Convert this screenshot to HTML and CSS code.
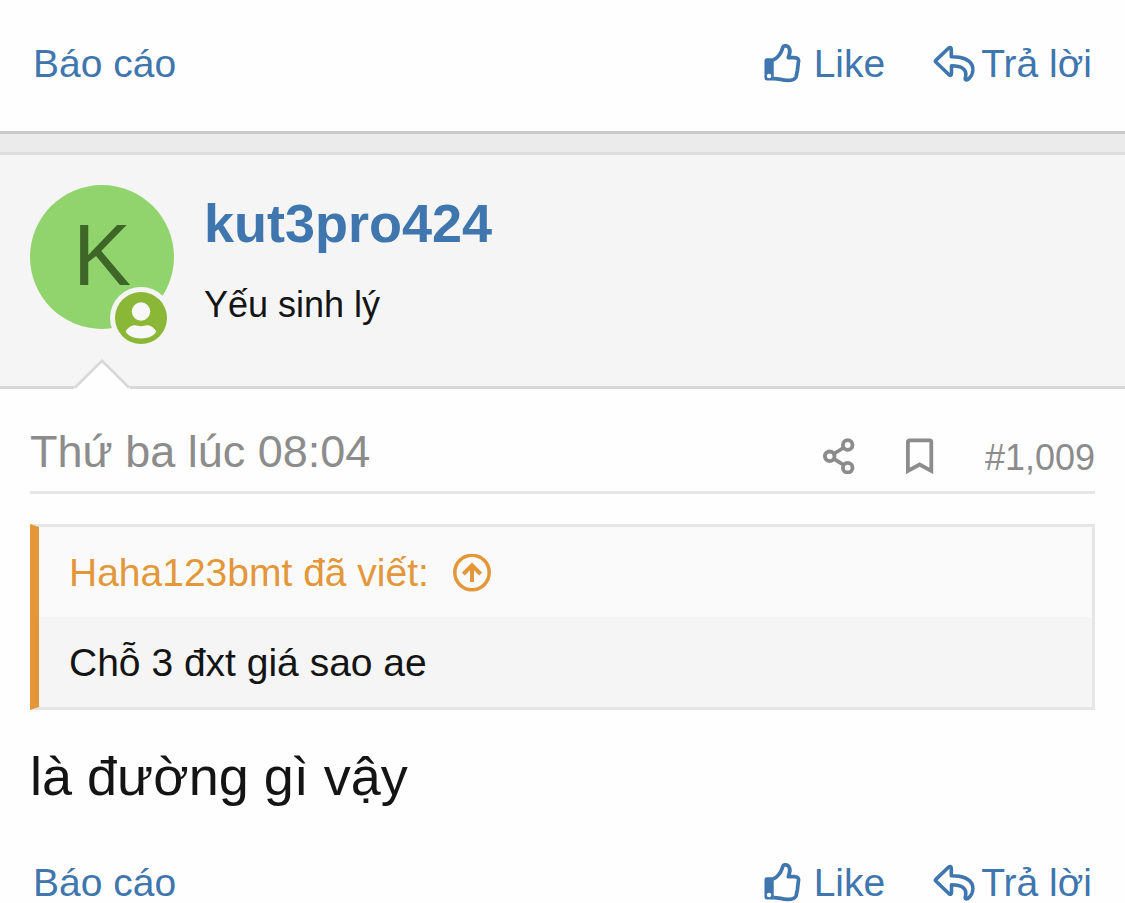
FILE: index.html
```
<!DOCTYPE html>
<html lang="vi">
<head>
<meta charset="utf-8">
<meta name="viewport" content="width=device-width, initial-scale=1">
<title>kut3pro424 #1,009</title>
<link rel="stylesheet" href="styles.css">
</head>
<body>
<svg class="sprite" aria-hidden="true">
  <symbol id="icon-like" viewBox="0 0 38 40">
    <path fill="currentColor" fill-rule="evenodd" d="M2.500 14.500H9.500V37.500H2.500Q0 37.500 0 35V17Q0 14.500 2.500 14.500ZM4.700 30.400A2.300 2.300 0 1 0 4.700 35A2.300 2.300 0 1 0 4.700 30.400Z"/>
    <path fill="none" stroke="currentColor" stroke-width="3.800" stroke-linejoin="round" d="M9 16.300C12.500 15.500 17 9.500 17.800 6.500L19 3C19.800 1.300 23.500 1.500 24.800 3.300C27 6.500 26 9.500 24.500 14H30.500C34 14 35.500 15.500 34.800 18.500L33.800 27L32.500 33.500C31.500 36.800 27 37.300 23.500 37.300C18 37.300 14 35.200 9 35.500"/>
  </symbol>
  <symbol id="icon-reply" viewBox="0 0 42 38">
    <path fill="none" stroke="currentColor" stroke-width="3.600" stroke-linejoin="round" d="M2.800 15.400L15.500 3.200Q18.300 1.200 18.300 4.500V11.700C30 11.700 37 15.500 39 20C40.500 24 40 29.500 36.500 33C33.500 36.300 31.500 35 32.500 32C34.500 23 27.500 21.200 18.500 20.800V28.500Q18.300 31.500 15.800 29.500L2.800 17Q2 16.200 2.800 15.400Z"/>
  </symbol>
</svg>

<main class="thread">
  <article class="post">
    <footer class="actions">
      <a class="action" href="#report">Báo cáo</a>
      <div class="actions-right">
        <a class="action action-like" href="#like"><svg class="icon-like" aria-hidden="true"><use href="#icon-like"/></svg>Like</a>
        <a class="action action-reply" href="#reply"><svg class="icon-reply" aria-hidden="true"><use href="#icon-reply"/></svg>Trả lời</a>
      </div>
    </footer>
  </article>

  <article class="post">
    <header class="user">
      <a class="avatar" href="#member" aria-label="kut3pro424">
        <span>K</span>
        <svg class="badge" viewBox="0 0 62 62" aria-hidden="true">
          <circle cx="31" cy="31" r="31" fill="#f5f5f5"/>
          <circle cx="31" cy="31" r="26" fill="#8bb736"/>
          <circle cx="31" cy="24.500" r="9.200" fill="#f8f8f8"/>
          <path fill="#f8f8f8" d="M15.700 44.500C17.500 41 21.500 38.300 25 38.300C27.500 38.300 28.500 39.200 31 39.200C33.500 39.200 34.500 38.300 37 38.300C40.500 38.300 44.500 41 46.300 44.500C42 53.800 20 53.800 15.700 44.500Z"/>
        </svg>
      </a>
      <div class="user-text">
        <h2 class="name"><a href="#member">kut3pro424</a></h2>
        <p class="user-title">Yếu sinh lý</p>
      </div>
      <svg class="pointer" viewBox="0 0 56 31" aria-hidden="true">
        <path fill="#fefefe" d="M0 31V30L28 2L56 30V31Z"/>
        <path fill="none" stroke="#d8d8d8" stroke-width="2.500" d="M1 29.500L28 2.800L55 29.500"/>
      </svg>
    </header>

    <div class="content">
      <div class="meta">
        <time class="date">Thứ ba lúc 08:04</time>
        <div class="meta-tools">
          <a class="tool" href="#share" aria-label="Share">
            <svg class="icon-share" viewBox="0 0 32 36" fill="none" stroke="currentColor" stroke-width="3.800" aria-hidden="true">
              <circle cx="6.700" cy="18.300" r="4.800"/><circle cx="24.700" cy="7" r="4.800"/><circle cx="24.700" cy="29.700" r="4.800"/>
              <path d="M10.500 16L21 9.500M10.500 20.600L21 27.200"/>
            </svg>
          </a>
          <a class="tool" href="#bookmark" aria-label="Bookmark">
            <svg class="icon-bookmark" viewBox="0 0 28 36" fill="none" stroke="currentColor" stroke-width="3.800" aria-hidden="true">
              <path d="M1.900 32.900V4Q1.900 2.400 3.500 2.400H23.800Q25.300 2.400 25.300 4V32.900L13.600 26.500Z"/>
            </svg>
          </a>
          <a class="number" href="#post-1009">#1,009</a>
        </div>
      </div>

      <blockquote class="quote">
        <a class="quote-source" href="#source">Haha123bmt đã viết:
          <svg class="icon-jump" viewBox="0 0 38 38" fill="none" stroke="currentColor" stroke-width="3.500" aria-hidden="true">
            <circle cx="19" cy="18.500" r="17.200"/>
            <path stroke-width="4" d="M19 28V11.500M10.300 20L19 11.300L27.700 20"/>
          </svg>
        </a>
        <p class="quote-text">Chỗ 3 đxt giá sao ae</p>
      </blockquote>

      <p class="message">là đường gì vậy</p>
    </div>

    <footer class="actions">
      <a class="action" href="#report">Báo cáo</a>
      <div class="actions-right">
        <a class="action action-like" href="#like"><svg class="icon-like" aria-hidden="true"><use href="#icon-like"/></svg>Like</a>
        <a class="action action-reply" href="#reply"><svg class="icon-reply" aria-hidden="true"><use href="#icon-reply"/></svg>Trả lời</a>
      </div>
    </footer>
  </article>
</main>
</body>
</html>
```
FILE: styles.css
```
* {
  box-sizing: border-box;
}

body {
  margin: 0;
  background: #ebebeb;
  color: #141414;
  font-family: "Helvetica Neue", "Liberation Sans", Arial, sans-serif;
  font-size: 39px;
}

a {
  color: inherit;
  text-decoration: none;
}

p,
h2,
blockquote {
  margin: 0;
}

svg {
  display: block;
  flex: none;
}

.sprite {
  position: absolute;
  width: 0;
  height: 0;
}

.thread {
  display: flex;
  flex-direction: column;
  gap: 18px;
}

.post {
  background: #fefefe;
  border-top: 3px solid #dedede;
  border-bottom: 3px solid #c8c8c8;
}

.post:first-child {
  padding: 44px 0 47px;
  border-top: 0;
}

.post:last-child {
  border-bottom: 0;
}

.actions {
  display: flex;
  justify-content: space-between;
  padding: 0 33px;
  color: #3f76ae;
  line-height: 40px;
}

.actions-right {
  display: flex;
  gap: 48px;
}

.action {
  display: flex;
  align-items: center;
}

.action-like {
  gap: 12px;
}

.action-reply {
  gap: 6px;
}

.icon-like {
  width: 38px;
  height: 40px;
  padding-bottom: 1px;
}

.icon-reply {
  width: 42px;
  height: 38px;
}

.user {
  position: relative;
  display: flex;
  gap: 30px;
  padding: 30px 30px 56px;
  background: #f5f5f5;
  border-bottom: 3px solid #d8d8d8;
}

.avatar {
  position: relative;
  display: flex;
  flex: none;
  align-items: center;
  justify-content: center;
  width: 144px;
  height: 144px;
  padding-bottom: 6px;
  border-radius: 50%;
  background: #91d46e;
  color: #3d6627;
  font-size: 87px;
  line-height: 1;
}

.badge {
  position: absolute;
  right: 2px;
  bottom: -20px;
  width: 62px;
  height: 62px;
}

.name {
  color: #3f76ae;
  font-size: 54px;
  line-height: 76px;
}

.user-title {
  margin-top: 19px;
  font-size: 36px;
  line-height: 50px;
}

.pointer {
  position: absolute;
  left: 74px;
  bottom: -3px;
  width: 56px;
  height: 31px;
}

.content {
  padding: 31px 30px 49px;
}

.meta {
  display: flex;
  align-items: flex-end;
  justify-content: space-between;
  padding-bottom: 7px;
  border-bottom: 3px solid #e6e6e6;
  color: #8c8c8c;
}

.date {
  font-size: 45px;
  line-height: 64px;
}

.meta-tools {
  display: flex;
  align-items: center;
  gap: 51px;
  font-size: 36px;
  line-height: 52px;
}

.tool {
  padding-bottom: 4px;
}

.icon-share {
  width: 32px;
  height: 36px;
}

.icon-bookmark {
  width: 28px;
  height: 36px;
}

.quote {
  margin: 30px 0 28px;
  background: #f5f5f5;
  border: 3px solid #e6e6e6;
  border-left: 9px solid #e39738;
}

.quote-source {
  display: flex;
  align-items: center;
  gap: 24px;
  padding: 18px 30px 16px;
  background: #fafafa;
  color: #e39738;
  line-height: 56px;
}

.icon-jump {
  width: 38px;
  height: 38px;
}

.quote-text {
  padding: 18px 30px 16px;
  line-height: 56px;
}

.message {
  font-size: 54px;
  line-height: 76px;
}
```
